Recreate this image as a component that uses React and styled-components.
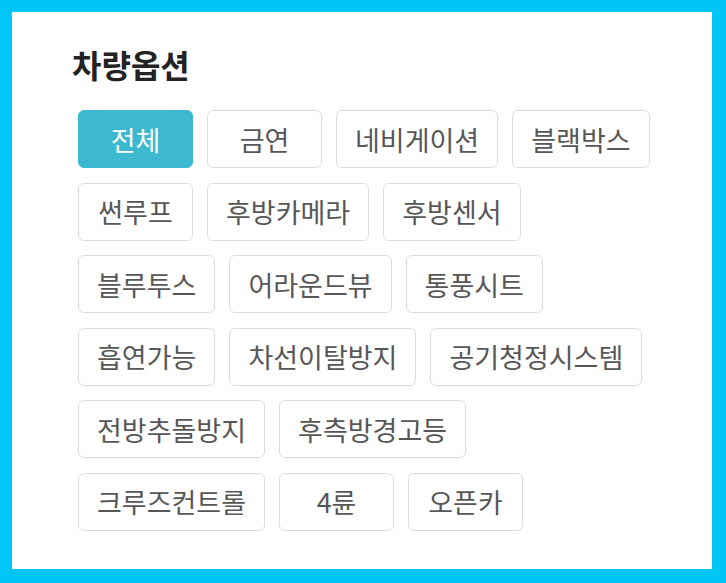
import React, { useState } from 'react';
import styled, { createGlobalStyle } from 'styled-components';

const GlobalStyle = createGlobalStyle`
  html, body {
    margin: 0;
    padding: 0;
    background: #00c6f6;
  }
  body {
    font-family: "Noto Sans CJK KR", "Noto Sans", sans-serif;
  }
`;

const Frame = styled.div`
  box-sizing: border-box;
  width: 726px;
  height: 583px;
  padding: 12px 14px 14px 12px;
  background: #00c6f6;
`;

const Panel = styled.section`
  box-sizing: border-box;
  height: 100%;
  background: #fff;
  padding: 30px 60px 0 66px;
`;

const Title = styled.h2`
  margin: 0 0 0 -6px;
  font-size: 32px;
  line-height: 44px;
  font-weight: 700;
  color: #222;
`;

const ChipList = styled.div`
  display: flex;
  flex-wrap: wrap;
  column-gap: 14px;
  row-gap: 14.5px;
  margin-top: 24px;
`;

const Chip = styled.button`
  box-sizing: border-box;
  height: 58px;
  min-width: 115px;
  padding: 0 18px;
  display: flex;
  align-items: center;
  justify-content: center;
  font-family: inherit;
  font-size: 27px;
  line-height: 1;
  color: ${(p) => (p.$active ? '#fff' : '#575757')};
  background: ${(p) => (p.$active ? '#3cb9cf' : '#fff')};
  border: 1px solid ${(p) => (p.$active ? '#3cb9cf' : '#dcdcdc')};
  border-radius: 6px;
  cursor: pointer;
`;

const options = [
  '전체', '금연', '네비게이션', '블랙박스',
  '썬루프', '후방카메라', '후방센서',
  '블루투스', '어라운드뷰', '통풍시트',
  '흡연가능', '차선이탈방지', '공기청정시스템',
  '전방추돌방지', '후측방경고등',
  '크루즈컨트롤', '4륜', '오픈카',
];

export default function App() {
  const [selected, setSelected] = useState('전체');

  return (
    <>
      <GlobalStyle />
      <Frame>
        <Panel>
          <Title>차량옵션</Title>
          <ChipList>
            {options.map((name) => (
              <Chip
                key={name}
                $active={name === selected}
                onClick={() => setSelected(name)}
              >
                {name}
              </Chip>
            ))}
          </ChipList>
        </Panel>
      </Frame>
    </>
  );
}
